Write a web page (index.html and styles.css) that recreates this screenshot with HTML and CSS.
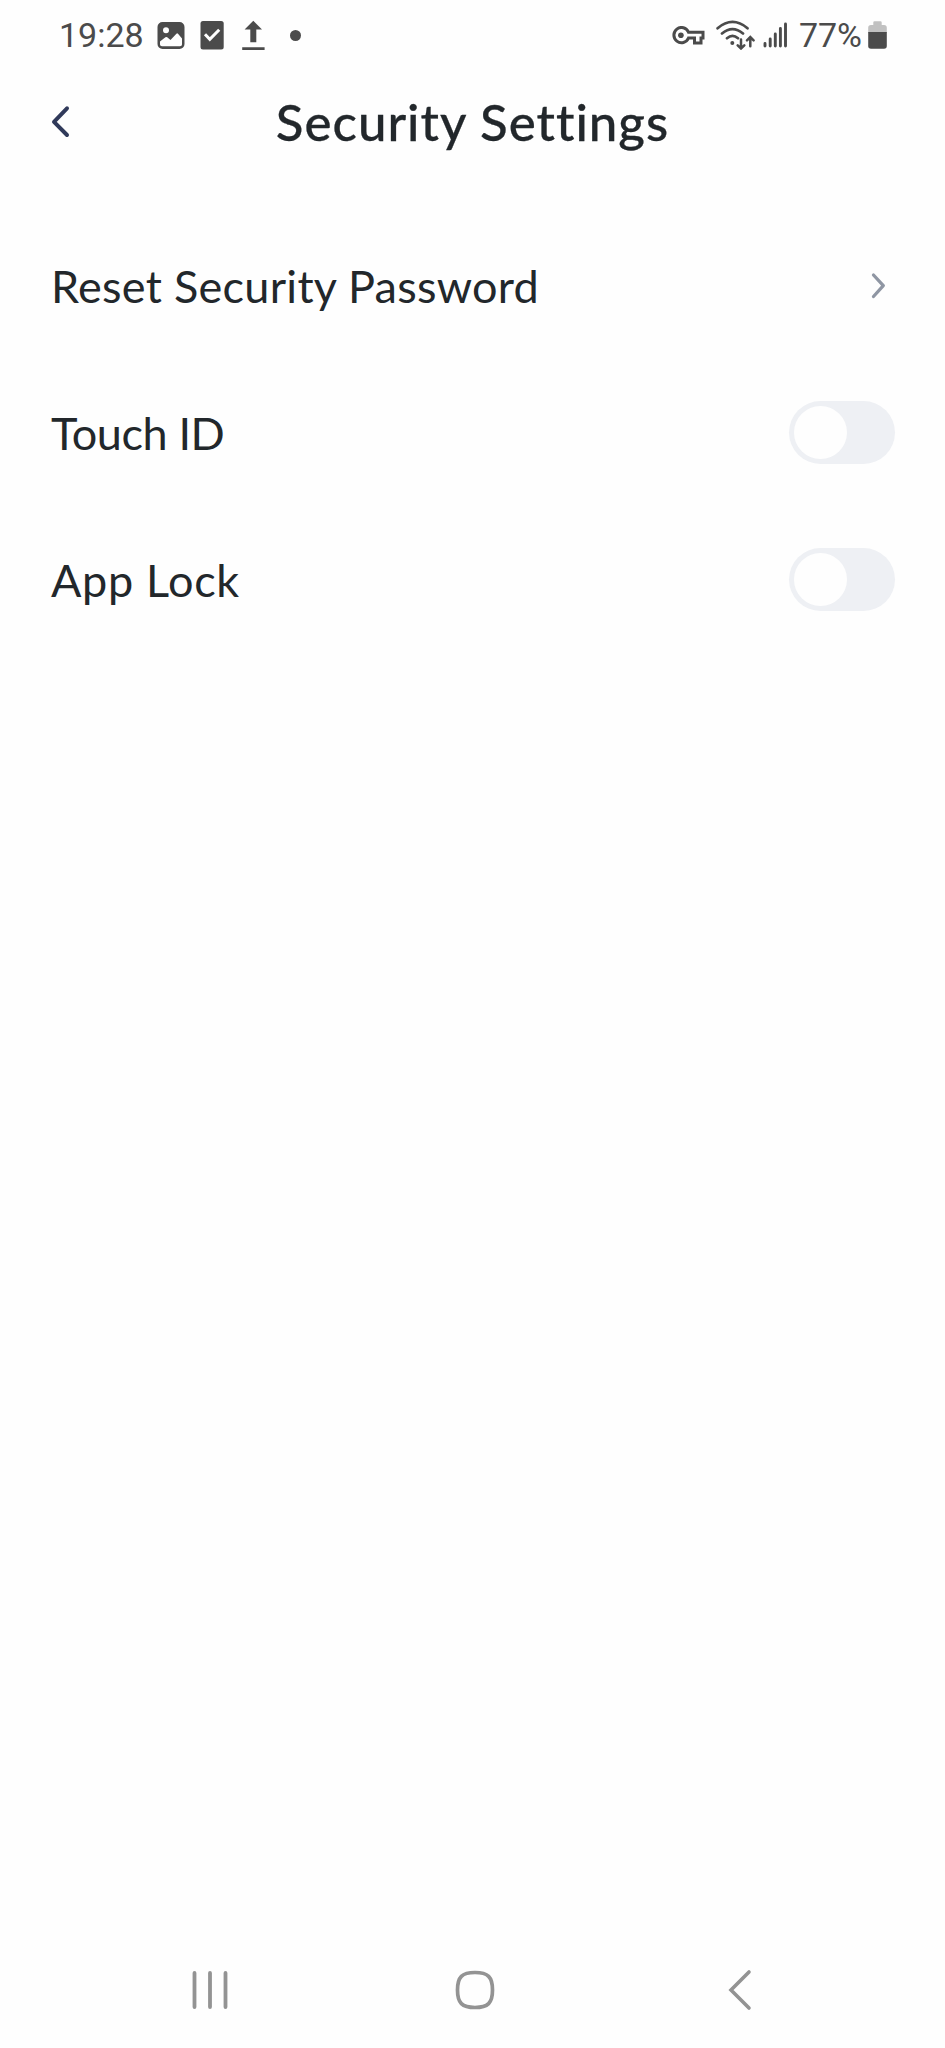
FILE: index.html
```html
<!DOCTYPE html>
<html lang="en">
<head>
<meta charset="utf-8">
<title>Security Settings</title>
<link rel="stylesheet" href="styles.css">
</head>
<body>
<div class="screen">
  <div class="status">
    <div class="status-left">
      <span class="time">19:28</span>
      <svg class="ico-image" width="28" height="30" viewBox="0 0 28 30"><path fill="#4b4b4b" fill-rule="evenodd" d="M5.500 2H22.500A5 5 0 0 1 27.500 7V24A5 5 0 0 1 22.500 29H5.500A5 5 0 0 1 .5 24V7A5 5 0 0 1 5.500 2ZM9 7.300A3 3 0 1 0 9 13.300A3 3 0 1 0 9 7.300ZM3 24.500Q3 26.300 5 26.300H23Q25 26.300 25 24.500V18.500L21 13.700Q20.200 13 19.400 13.700L13.500 20L10.200 17.200Q9.300 16.600 8.400 17.200L3 21.500Z"/></svg>
      <svg class="ico-task" width="24" height="30" viewBox="0 0 24 30"><rect x=".5" y="1" width="23.200" height="28.500" rx="2.500" fill="#4b4b4b"/><path d="M5 14.300L9.800 19.300L19.200 9.800" fill="none" stroke="#fefefe" stroke-width="3"/></svg>
      <svg class="ico-upload" width="23" height="30" viewBox="0 0 23 30"><path fill="#4b4b4b" d="M11.300 .7L20 9.500H14.300V22.300H8.300V9.500H2.600ZM.2 27.300H22.600V30H.2Z"/></svg>
      <span class="dot"></span>
    </div>
    <div class="status-right">
      <svg class="ico-key" width="33" height="20" viewBox="0 0 33 20"><path d="M16.500 6.200H31V12H29V17H22.500V12H16.500A7.600 7.600 0 1 1 16.500 6.200Z" fill="none" stroke="#4b4b4b" stroke-width="3"/><circle cx="8.900" cy="9.300" r="2.800" fill="#4b4b4b"/></svg>
      <svg class="ico-wifi" width="40" height="30" viewBox="0 0 40 30"><g fill="none" stroke="#4b4b4b" stroke-width="2.700" stroke-linecap="round"><path d="M1.600 8.300Q16.500-4.400 31.500 8.300M6 13.500Q16.500 4.600 27 13.500M11 18.200Q16.500 13.500 22 18.200"/><path stroke-width="2.500" d="M25 19.500V28M21.700 25.300L25 28.500L28.300 25.300M34.300 26.300V17.500M31 20.300L34.300 17L37.600 20.300"/></g><circle cx="16.300" cy="23" r="2" fill="#4b4b4b"/></svg>
      <svg class="ico-signal" width="25" height="26" viewBox="0 0 25 26"><path d="M2 21.500V24M7.200 17V24M12.300 12V24M17.400 6.500V24M22.500 2V24" fill="none" stroke="#4b4b4b" stroke-width="2.900" stroke-linecap="round"/></svg>
      <span class="percent">77%</span>
      <svg class="ico-battery" width="19" height="28" viewBox="0 0 19 28"><path fill="#c1c1c1" d="M5.300 4V1.500Q5.300 .3 6.500 .3H12.500Q13.700 .3 13.700 1.500V4H16Q18.800 4 18.800 6.800V12H.2V6.800Q.2 4 3 4Z"/><path fill="#4b4b4b" d="M.2 11H18.800V25Q18.800 27.700 16 27.700H3Q.2 27.700 .2 25Z"/></svg>
    </div>
  </div>
  <header class="header">
    <svg class="back" width="20" height="34" viewBox="0 0 20 34"><path d="M16 3.300L3 16.800L16 30" fill="none" stroke="#303a5a" stroke-width="4" stroke-linecap="round" stroke-linejoin="round"/></svg>
    <h1 class="title">Security Settings</h1>
  </header>
  <main class="list">
    <div class="row"><span class="label label-reset">Reset Security Password</span><svg class="chevron" width="16" height="28" viewBox="0 0 16 28"><path d="M3.500 3L13.300 13.700L3.500 24.500" fill="none" stroke="#8f96a3" stroke-width="3.300" stroke-linecap="round" stroke-linejoin="round"/></svg></div>
    <div class="row"><span class="label label-touch">Touch ID</span><span class="toggle"><span class="knob"></span></span></div>
    <div class="row"><span class="label label-lock">App Lock</span><span class="toggle"><span class="knob"></span></span></div>
  </main>
  <nav class="nav">
    <svg width="36" height="40" viewBox="0 0 36 40"><path d="M2.500 3V37M18 3V37M33.500 3V37" fill="none" stroke="#939393" stroke-width="3.800" stroke-linecap="round"/></svg>
    <svg class="home" width="40" height="40" viewBox="0 0 40 40"><path d="M20 2.500C33 2.500 37.500 7 37.500 20S33 37.500 20 37.500S2.500 33 2.500 20S7 2.500 20 2.500Z" fill="none" stroke="#939393" stroke-width="3.700"/></svg>
    <svg width="24" height="42" viewBox="0 0 24 42"><path d="M21 3L3 21L21 39" fill="none" stroke="#939393" stroke-width="3.600" stroke-linecap="round"/></svg>
  </nav>
</div>
</body>
</html>
```
FILE: styles.css
```css
body { margin: 0; background: #fefefe; }
.screen {
  display: flex;
  flex-direction: column;
  height: 2048px;
  font-family: Lato, "Open Sans", sans-serif;
  color: #22272b;
}
svg { display: block; flex: none; }
.status {
  display: flex;
  justify-content: space-between;
  height: 70px;
  padding: 0 58px 0 59px;
  font: 34px/70px Roboto, sans-serif;
  color: #4b4b4b;
}
.status-left, .status-right { display: flex; align-items: center; }
.time { width: 98px; }
.ico-image { margin-right: 15px; }
.ico-task { margin-right: 18px; }
.ico-upload { margin-right: 25px; }
.dot { width: 11px; height: 11px; border-radius: 50%; background: #4b4b4b; }
.ico-key { margin: 2px 11px 0 0; }
.ico-wifi { margin-right: 7px; }
.ico-signal { margin-right: 11px; }
.percent { width: 69px; letter-spacing: -0.1px; }
.header {
  display: grid;
  grid-template-columns: 20px 1fr 20px;
  align-items: center;
  height: 104px;
  margin-bottom: 38px;
  padding: 0 51px;
}
.title {
  margin: 0;
  text-align: center;
  font-size: 51px;
  font-weight: 500;
  line-height: 60px;
  white-space: nowrap;
  letter-spacing: 1px;
  -webkit-text-stroke: 0.3px currentColor;
}
.row {
  display: flex;
  align-items: center;
  justify-content: space-between;
  height: 147px;
  padding: 0 50px 0 51px;
}
.label { font-size: 45px; line-height: 54px; white-space: nowrap; }
.label-reset { letter-spacing: 0.28px; }
.label-touch { letter-spacing: -0.4px; }
.label-lock { letter-spacing: 0.65px; }
.chevron { margin-right: 9px; }
.toggle {
  box-sizing: border-box;
  width: 106px;
  height: 63px;
  padding: 5px;
  border-radius: 32px;
  background: #eef0f4;
}
.knob { display: block; width: 53px; height: 53px; border-radius: 50%; background: #fefefe; }
.nav {
  display: flex;
  align-items: center;
  justify-content: space-between;
  height: 116px;
  margin-top: auto;
  padding: 0 193px 0 192px;
}
.home { margin-right: 6px; }
```
